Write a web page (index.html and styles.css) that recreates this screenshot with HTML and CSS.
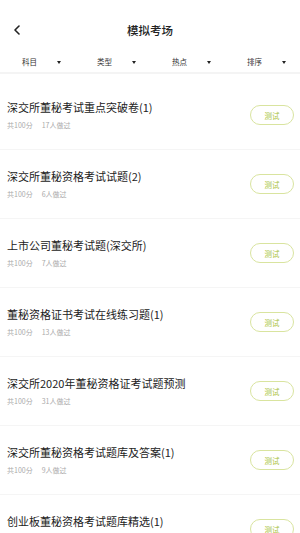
FILE: index.html
```html
<!DOCTYPE html>
<html lang="zh">
<head>
<meta charset="utf-8">
<link rel="stylesheet" href="styles.css">
</head>
<body>
<div class="page">
  <header class="topbar">
    <span class="back">
      <svg width="8" height="10" viewBox="0 0 8 10"><path d="M6 1 L2 5 L6 9" fill="none" stroke="#222" stroke-width="1.6" stroke-linecap="round" stroke-linejoin="round"/></svg>
    </span>
    <h1 class="title">模拟考场</h1>
  </header>
  <nav class="filters">
    <div class="filter"><span class="flabel">科目</span><span class="tri"></span></div>
    <div class="filter"><span class="flabel">类型</span><span class="tri"></span></div>
    <div class="filter"><span class="flabel">热点</span><span class="tri"></span></div>
    <div class="filter"><span class="flabel">排序</span><span class="tri"></span></div>
  </nav>
  <ul class="list">
    <li class="item"><div class="info"><div class="name">深交所董秘考试重点突破卷(1)</div><div class="meta"><span>共100分</span><span>17人做过</span></div></div><span class="btn">测试</span></li>
    <li class="item"><div class="info"><div class="name">深交所董秘资格考试试题(2)</div><div class="meta"><span>共100分</span><span>6人做过</span></div></div><span class="btn">测试</span></li>
    <li class="item"><div class="info"><div class="name">上市公司董秘考试题(深交所)</div><div class="meta"><span>共100分</span><span>7人做过</span></div></div><span class="btn">测试</span></li>
    <li class="item"><div class="info"><div class="name">董秘资格证书考试在线练习题(1)</div><div class="meta"><span>共100分</span><span>13人做过</span></div></div><span class="btn">测试</span></li>
    <li class="item"><div class="info"><div class="name">深交所2020年董秘资格证考试题预测</div><div class="meta"><span>共100分</span><span>31人做过</span></div></div><span class="btn">测试</span></li>
    <li class="item"><div class="info"><div class="name">深交所董秘资格考试题库及答案(1)</div><div class="meta"><span>共100分</span><span>9人做过</span></div></div><span class="btn">测试</span></li>
    <li class="item"><div class="info"><div class="name">创业板董秘资格考试题库精选(1)</div><div class="meta"><span>共100分</span><span>11人做过</span></div></div><span class="btn">测试</span></li>
  </ul>
</div>
</body>
</html>
```

FILE: styles.css
```css
* { box-sizing: border-box; margin: 0; padding: 0; }
html, body { background: #fff; }
body {
  font-family: "Noto Sans CJK SC", "Noto Sans", sans-serif;
  color: #222;
  width: 300px;
  overflow: hidden;
}
.page { width: 300px; }
.topbar {
  position: relative;
  height: 44px;
  margin-top: 8px;
  display: flex;
  align-items: center;
  justify-content: center;
}
.back {
  position: absolute;
  left: 13px;
  top: 17px;
  display: flex;
}
.title {
  font-size: 11.5px;
  font-weight: 500;
  color: #222;
  line-height: 16px;
}
.filters {
  display: grid;
  grid-template-columns: repeat(4, 1fr);
  height: 20px;
  margin-bottom: 7px;
  border-bottom: 2px solid #f4f4f4;
  box-sizing: content-box;
  padding-bottom: 0;
}
.filter {
  display: flex;
  align-items: center;
  padding-left: 22px;
}
.flabel {
  font-size: 7.5px;
  color: #333;
  line-height: 10px;
  width: 15px;
}
.tri {
  margin-left: 20px;
  width: 0;
  height: 0;
  border-left: 2.5px solid transparent;
  border-right: 2.5px solid transparent;
  border-top: 3.5px solid #222;
}
.list { list-style: none; }
.item {
  height: 69px;
  border-bottom: 1px solid #f5f5f5;
  display: flex;
  align-items: center;
  justify-content: space-between;
  padding: 0 6px 0 7px;
}
.name {
  font-size: 11px;
  line-height: 15px;
  color: #222;
  margin-bottom: 5px;
}
.meta {
  font-size: 7px;
  line-height: 10px;
  color: #aaa;
  display: flex;
  gap: 9px;
}
.btn {
  width: 44px;
  height: 20px;
  border: 1px solid #d9e49f;
  border-radius: 10px;
  display: flex;
  align-items: center;
  justify-content: center;
  font-size: 7.5px;
  color: #a9c23c;
}
```
